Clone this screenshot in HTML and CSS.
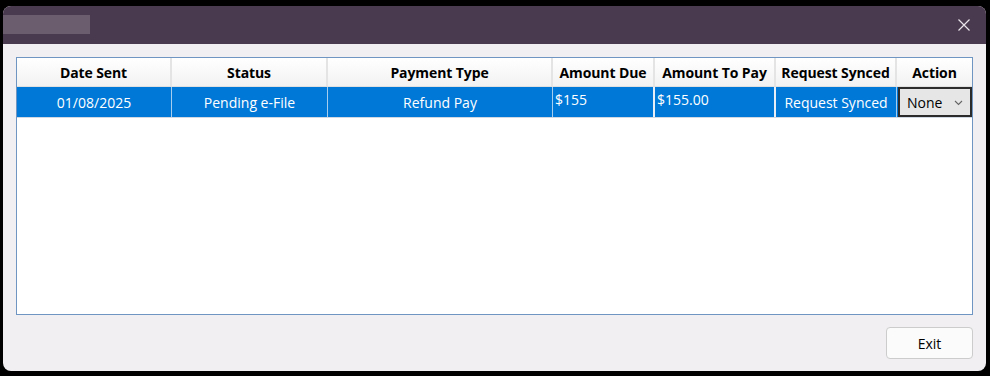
FILE: index.html
```html
<!DOCTYPE html>
<html>
<head>
<meta charset="utf-8">
<link rel="stylesheet" href="styles.css">
</head>
<body>
<div class="window">
  <div class="titlebar">
    <div class="title-blur"></div>
    <svg class="close" width="14" height="14" viewBox="0 0 14 14"><path d="M1.5 1.5 L12.5 12.5 M12.5 1.5 L1.5 12.5" stroke="#e8e4ea" stroke-width="1.2" fill="none"/></svg>
  </div>
  <div class="content">
    <div class="grid">
      <div class="row header">
        <div class="cell">Date Sent</div>
        <div class="cell">Status</div>
        <div class="cell">Payment Type</div>
        <div class="cell">Amount Due</div>
        <div class="cell">Amount To Pay</div>
        <div class="cell">Request Synced</div>
        <div class="cell last">Action</div>
      </div>
      <div class="row data">
        <div class="cell">01/08/2025</div>
        <div class="cell">Pending e-File</div>
        <div class="cell">Refund Pay</div>
        <div class="cell left">$155</div>
        <div class="cell left">$155.00</div>
        <div class="cell">Request Synced</div>
        <div class="cell last combo-cell">
          <div class="combo"><span>None</span><svg width="9" height="6" viewBox="0 0 9 6"><path d="M1 1 L4.5 4.5 L8 1" stroke="#666" stroke-width="1.1" fill="none"/></svg></div>
        </div>
      </div>
    </div>
    <div class="footer">
      <button class="exit">Exit</button>
    </div>
  </div>
</div>
</body>
</html>
```
FILE: styles.css
```css
html, body {
  margin: 0;
  padding: 0;
  background: #000;
  width: 990px;
  height: 376px;
  overflow: hidden;
}
body {
  font-family: "Open Sans", "Noto Sans", sans-serif;
  font-size: 14px;
  color: #000;
}
.window {
  margin: 6px 0 0 3px;
  width: 983px;
  height: 365px;
  background: #f1eff2;
  border-radius: 8px;
  overflow: hidden;
  display: flex;
  flex-direction: column;
}
.titlebar {
  height: 38px;
  background: #4a3a4f;
  display: flex;
  align-items: center;
  justify-content: space-between;
  flex-shrink: 0;
}
.title-blur {
  width: 87px;
  height: 19px;
  background: #6b5c6e;
  margin-top: -1px;
  filter: blur(0.6px);
}
.close {
  margin-right: 15px;
}
.content {
  padding: 13px 13px 0 13px;
  display: flex;
  flex-direction: column;
}
.grid {
  width: 955px;
  height: 256px;
  border: 1px solid #6f96c2;
  background: #fff;
}
.row {
  display: grid;
  grid-template-columns: 155px 156px 225px 102px 121px 121px 75px;
}
.header {
  height: 28px;
  background: linear-gradient(#ffffff, #f2f2f2);
  font-weight: 700;
  letter-spacing: -0.1px;
}
.header .cell {
  border-right: 2px solid #e4e4e4;
  display: flex;
  align-items: center;
  justify-content: center;
  padding-top: 1px;
  white-space: nowrap;
}
.header .cell.last { border-right: none; }
.data {
  height: 30px;
  background: #0078d7;
  color: #fff;
  border-top: 1px solid #e0e0e0;
  border-bottom: 1px solid #d0d8e4;
}
.data .cell {
  border-right: 1px solid #a6cdee;
  display: flex;
  align-items: center;
  justify-content: center;
  white-space: nowrap;
}
.data .cell.left {
  justify-content: flex-start;
  align-items: flex-start;
  padding-left: 2px;
  padding-top: 3px;
  border-right: 2px solid #e8eef5;
}
.data .cell.last { border-right: none; }
.data .combo-cell {
  padding: 0;
  align-items: stretch;
  justify-content: stretch;
}
.combo {
  flex: 1;
  margin-left: 1px;
  border: 2px solid #2b2b2b;
  background: #e6e6e6;
  color: #000;
  display: flex;
  align-items: center;
  justify-content: space-between;
  padding: 1px 7px 0 7px;
  font-size: 14px;
}
.footer {
  display: flex;
  justify-content: flex-end;
  margin-top: 12px;
}
.exit {
  width: 87px;
  height: 32px;
  background: #fbfbfb;
  border: 1px solid #cccccc;
  border-radius: 4px;
  font-family: "Open Sans", "Noto Sans", sans-serif;
  font-size: 14px;
  color: #000;
  padding: 0;
}
```
